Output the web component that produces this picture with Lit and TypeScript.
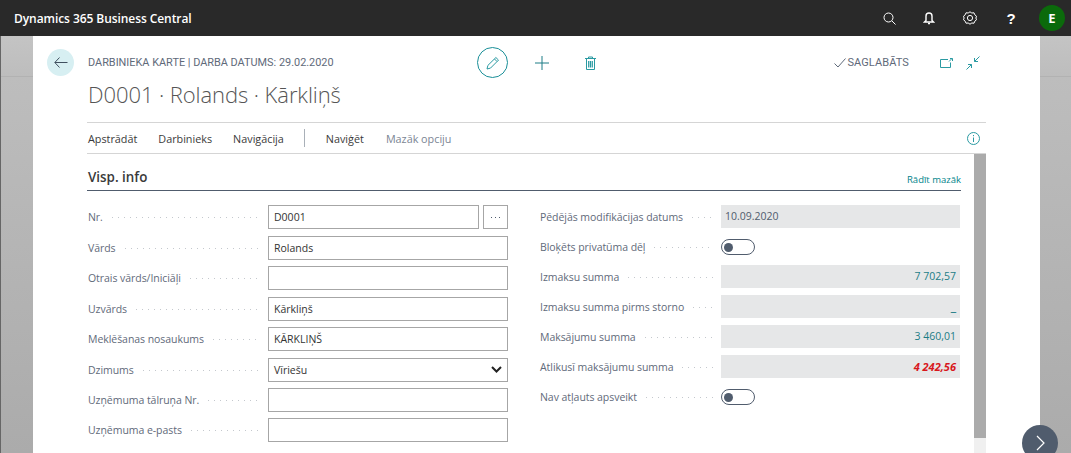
import { LitElement, html, css, svg } from "lit";
import { customElement } from "lit/decorators.js";

const leftRows = [
  { label: "Nr.", value: "D0001", lookup: true },
  { label: "Vārds", value: "Rolands" },
  { label: "Otrais vārds/Iniciāļi", value: "" },
  { label: "Uzvārds", value: "Kārkliņš" },
  { label: "Meklēšanas nosaukums", value: "KĀRKLIŅŠ" },
  { label: "Dzimums", value: "Vīriešu", select: true },
  { label: "Uzņēmuma tālruņa Nr.", value: "" },
  { label: "Uzņēmuma e-pasts", value: "" },
];

const rightRows = [
  { label: "Pēdējās modifikācijas datums", value: "10.09.2020", kind: "text" },
  { label: "Bloķēts privatūma dēļ", kind: "toggle" },
  { label: "Izmaksu summa", value: "7 702,57", kind: "num" },
  { label: "Izmaksu summa pirms storno", value: "_", kind: "num dash" },
  { label: "Maksājumu summa", value: "3 460,01", kind: "num" },
  { label: "Atlikusī maksājumu summa", value: "4 242,56", kind: "neg" },
  { label: "Nav atļauts apsveikt", kind: "toggle" },
];

const icon = (w: number, h: number, body: unknown, cls = "") =>
  html`<svg class=${cls} width=${w} height=${h} viewBox="0 0 ${w} ${h}" fill="none" stroke="currentColor">${body}</svg>`;

@customElement("app-root")
export class AppRoot extends LitElement {
  static styles = css`
    :host {
      display: block;
      position: relative;
      width: 1071px;
      height: 453px;
      overflow: hidden;
      font-family: "Open Sans", "Noto Sans", sans-serif;
      color: #333;
    }
    .appbar {
      height: 36px;
      background: #292929;
      color: #fff;
      display: flex;
      align-items: center;
      padding: 0 6px 0 14px;
    }
    .brand {
      font-size: 12px;
      font-weight: 600;
      letter-spacing: -0.07px;
      flex: 1;
    }
    .appicons {
      display: flex;
      align-items: center;
    }
    .appicons svg {
      display: block;
    }
    .help {
      font-family: "Liberation Sans", sans-serif;
      font-weight: 700;
      font-size: 15px;
      width: 12px;
      text-align: center;
      margin-left: 28px;
      margin-right: 22px;
    }
    .avatar {
      width: 26px;
      height: 26px;
      border-radius: 50%;
      background: #0b6a0b;
      color: #fff;
      font-size: 13px;
      font-weight: 700;
      display: flex;
      align-items: center;
      justify-content: center;
    }
    .stage {
      display: flex;
      height: 417px;
    }
    .gutter {
      background:
        linear-gradient(transparent 40px, #b2b2b2 40px, #b2b2b2 41px, transparent 41px),
        linear-gradient(#c4c4c4, #bdbdbd 40px, #ababab 100%);
    }
    .gutter.l {
      width: 33px;
      box-sizing: border-box;
      border-left: 1px solid #666;
    }
    .gutter.r {
      width: 31px;
    }
    .card {
      flex: 1;
      background: #fff;
      padding: 0 54px 0 14px;
      display: flex;
      flex-direction: column;
    }
    .head {
      display: flex;
      align-items: center;
      height: 31px;
      margin-top: 11px;
    }
    .back {
      width: 27px;
      height: 27px;
      border-radius: 50%;
      background: #d7eff2;
      color: #40505f;
      display: flex;
      align-items: center;
      justify-content: center;
      margin-right: 14px;
    }
    .crumb {
      font-family: Roboto, sans-serif;
      font-size: 10.9px;
      color: #5f6a7a;
      width: 389px;
    }
    .actions {
      display: flex;
      align-items: center;
      color: #2a9aa2;
    }
    .edit {
      width: 29px;
      height: 29px;
      border: 1px solid #1a8f98;
      border-radius: 50%;
      display: flex;
      align-items: center;
      justify-content: center;
      margin-right: 27px;
    }
    .plus {
      margin-right: 36px;
      color: #1c7d86;
    }
    .status {
      margin-left: auto;
      display: flex;
      align-items: center;
      font-family: Roboto, sans-serif;
      font-size: 11px;
      letter-spacing: 0.1px;
      color: #5f6a7a;
    }
    .status svg.chk {
      margin-right: 1px;
    }
    .status .share {
      margin-left: 31px;
      color: #2a9aa2;
    }
    .status .shrink {
      margin-left: 13px;
      margin-right: 6px;
      color: #2a9aa2;
    }
    .title {
      font-size: 22px;
      font-weight: 300;
      letter-spacing: -0.08px;
      color: #555;
      margin-left: 41px;
      height: 44px;
      line-height: 32px;
      white-space: nowrap;
    }
    .toolbar {
      margin-left: 40px;
      height: 30px;
      border-top: 1px solid #d5d5d5;
      border-bottom: 1px solid #d5d5d5;
      display: flex;
      align-items: center;
      font-size: 10.8px;
      color: #3a3a3a;
      padding: 0 6px 0 1px;
    }
    .toolbar span {
      margin-right: 21px;
    }
    .toolbar .sep {
      width: 1px;
      height: 18px;
      background: #a9b0b8;
      margin: 0 21px 0 -1px;
    }
    .toolbar .muted {
      color: #7b8594;
      margin-left: 1px;
    }
    .toolbar svg {
      margin-left: auto;
      color: #2a9aa2;
    }
    .body {
      margin-left: 40px;
      flex: 1;
      display: flex;
      min-height: 0;
    }
    .content {
      width: 874px;
      margin-right: 13px;
    }
    .scroll {
      width: 12px;
      background: #f0f0f0;
    }
    .thumb {
      height: 284px;
      background: #ababab;
    }
    .section {
      height: 37px;
      box-sizing: border-box;
      padding-bottom: 4px;
      border-bottom: 1px solid #505c6d;
      display: flex;
      align-items: flex-end;
      justify-content: space-between;
    }
    .section b {
      font-size: 13.4px;
      font-weight: 600;
      color: #3a3a3a;
      margin-left: 1px;
    }
    .section a {
      font-size: 9.5px;
      color: #00838a;
    }
    .form {
      display: grid;
      grid-template-columns: 421px 420px;
      column-gap: 32px;
      padding-top: 14.1px;
    }
    .col {
      display: flex;
      flex-direction: column;
    }
    .col.r {
      margin-top: -1px;
    }
    .row {
      display: flex;
      align-items: center;
      height: 30.45px;
      padding-bottom: 6px;
      box-sizing: border-box;
    }
    .col.r .row {
      height: 30px;
    }
    .label {
      width: 181px;
      flex: none;
      display: flex;
      align-items: center;
      font-size: 10.5px;
      letter-spacing: -0.05px;
      color: #5f6a7a;
      padding-left: 1px;
      box-sizing: border-box;
      white-space: nowrap;
    }
    .col.r .label {
      padding-left: 0;
      margin-top: 2px;
    }
    .dots {
      flex: 1;
      height: 1px;
      margin: 1px 8px 0 9px;
      background: repeating-linear-gradient(90deg, #c4c8cd 0 1px, transparent 1px 6px);
    }
    .input {
      flex: 1;
      height: 24px;
      box-sizing: border-box;
      border: 1px solid #a6a6a6;
      font-size: 10.5px;
      color: #333;
      padding: 0 5px;
      display: flex;
      align-items: center;
      justify-content: space-between;
    }
    .lookup {
      width: 25px;
      height: 24px;
      flex: none;
      box-sizing: border-box;
      border: 1px solid #a6a6a6;
      margin-left: 4px;
      display: flex;
      align-items: center;
      justify-content: center;
      color: #505c6d;
    }
    .ro {
      flex: 1;
      height: 23px;
      background: #e6e7e8;
      font-size: 10.5px;
      color: #505c6d;
      padding: 0 4px;
      display: flex;
      align-items: center;
    }
    .ro.num {
      justify-content: flex-end;
      color: #1c7d86;
    }
    .ro.dash {
      font-size: 13px;
      font-weight: 700;
    }
    .ro.neg {
      justify-content: flex-end;
      color: #d8171c;
      font-size: 11px;
      font-weight: 700;
      font-style: italic;
    }
    .toggle {
      width: 34px;
      height: 16px;
      box-sizing: border-box;
      border: 1px solid #505c6d;
      border-radius: 8px;
      display: flex;
      align-items: center;
      padding-left: 2px;
      margin-top: 2px;
    }
    .toggle i {
      width: 9px;
      height: 9px;
      border-radius: 50%;
      background: #505c6d;
    }
    .fab {
      position: absolute;
      left: 1022px;
      top: 425px;
      width: 36px;
      height: 36px;
      border-radius: 50%;
      background: #505c6d;
      color: #fff;
      display: flex;
      align-items: center;
      justify-content: center;
    }
  `;

  renderLeft(r: any) {
    return html`<div class="row">
      <div class="label">${r.label}<span class="dots"></span></div>
      <div class="input">
        ${r.value}
        ${r.select
          ? icon(11, 7, svg`<path d="M1 1l4.500 4.500L10 1" stroke="#222" stroke-width="2"/>`)
          : ""}
      </div>
      ${r.lookup
        ? html`<div class="lookup">
            ${icon(11, 3, svg`<path d="M1 1.500h1M5 1.500h1M9 1.500h1" stroke-width="1"/>`)}
          </div>`
        : ""}
    </div>`;
  }

  renderRight(r: any) {
    return html`<div class="row">
      <div class="label">${r.label}<span class="dots"></span></div>
      ${r.kind === "toggle"
        ? html`<div class="toggle"><i></i></div>`
        : html`<div class="ro ${r.kind}">${r.value}</div>`}
    </div>`;
  }

  render() {
    return html`
      <div class="appbar">
        <div class="brand">Dynamics 365 Business Central</div>
        <div class="appicons">
          ${icon(13, 13, svg`<circle cx="5.500" cy="5.500" r="4.500"/><path d="M9 9l3.500 3.500"/>`)}
          <span style="width:27px"></span>
          ${icon(12, 14, svg`<path d="M3 9.500V5a3 3 0 0 1 6 0v4.500l1.500 1.500h-9z" stroke-width="1.400"/><path d="M5 12.500h2" stroke-width="1.400"/>`)}
          <span style="width:28px"></span>
          ${icon(14, 14, svg`<path d="M7 .8l1.800 1.200 2.200-.2.8 2 1.700 1.400-.6 1.800.6 1.800-1.700 1.400-.8 2-2.200-.2L7 13.200 5.200 12l-2.200.2-.8-2L.5 8.800 1.100 7 .5 5.200l1.700-1.400.8-2 2.200.2z"/><circle cx="7" cy="7" r="2.600"/>`)}
          <span class="help">?</span>
          <div class="avatar">E</div>
        </div>
      </div>
      <div class="stage">
        <div class="gutter l"></div>
        <div class="card">
          <div class="head">
            <div class="back">
              ${icon(14, 11, svg`<path d="M13.500 5.500H1M5.500.5L.8 5.500l4.700 5" stroke-width="1"/>`)}
            </div>
            <div class="crumb">DARBINIEKA KARTE | DARBA DATUMS: 29.02.2020</div>
            <div class="actions">
              <div class="edit">
                ${icon(14, 14, svg`<path d="M1 13l.9-3.600L9.900 1.500l2.600 2.600-8 8z"/><path d="M8.500 3l2.500 2.500"/>`)}
              </div>
              ${icon(14, 14, svg`<path d="M7 0v14M0 7h14"/>`, "plus")}
              ${icon(11, 14, svg`<path d="M0 2.500h11M3.500 2.500V1h4v1.500M1.500 2.500v11h8v-11"/><path d="M3.700 5v6.500M5.500 5v6.500M7.300 5v6.500" stroke-width="1.200"/>`)}
            </div>
            <div class="status">
              ${icon(12, 10, svg`<path d="M.5 5.500l3.500 3.500 7.500-8.500"/>`, "chk")}
              SAGLABĀTS
              ${icon(13, 10, svg`<path d="M8 1.500H.5v8h10V4.500"/><path d="M9 3.500L12 .5M10 .5h2.500V3"/>`, "share")}
              ${icon(14, 14, svg`<path d="M13.500.5L8.500 5.500M8.500 2v3.500H12M.5 13.500l5-5M5.500 12V8.500H2"/>`, "shrink")}
            </div>
          </div>
          <div class="title">D0001 · Rolands · Kārkliņš</div>
          <div class="toolbar">
            <span>Apstrādāt</span>
            <span>Darbinieks</span>
            <span>Navigācija</span>
            <i class="sep"></i>
            <span>Naviģēt</span>
            <span class="muted">Mazāk opciju</span>
            ${icon(13, 13, svg`<circle cx="6.500" cy="6.500" r="6"/><path d="M6.500 5.500v4.500M6.500 3v1.200"/>`)}
          </div>
          <div class="body">
            <div class="content">
              <div class="section"><b>Visp. info</b><a>Rādīt mazāk</a></div>
              <div class="form">
                <div class="col">${leftRows.map((r) => this.renderLeft(r))}</div>
                <div class="col r">${rightRows.map((r) => this.renderRight(r))}</div>
              </div>
            </div>
            <div class="scroll"><div class="thumb"></div></div>
          </div>
        </div>
        <div class="gutter r"></div>
      </div>
      <div class="fab">
        ${icon(9, 16, svg`<path d="M1 1l7 7-7 7" stroke-width="1.200"/>`)}
      </div>
    `;
  }
}
